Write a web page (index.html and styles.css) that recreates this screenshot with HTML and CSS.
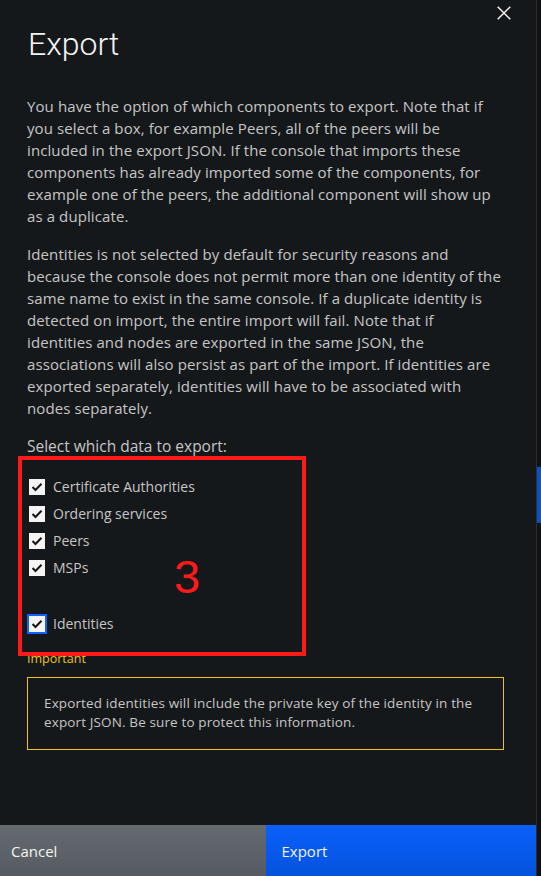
FILE: index.html
```html
<!DOCTYPE html>
<html>
<head>
<meta charset="utf-8">
<link rel="stylesheet" href="styles.css">
</head>
<body>
<div class="page">
  <div class="modal">
    <button class="close" aria-label="Close">
      <svg width="14" height="14" viewBox="0 0 14 14"><path d="M0.7 0.7 L13.3 13.3 M13.3 0.7 L0.7 13.3" stroke="#f4f4f4" stroke-width="1.5" fill="none"/></svg>
    </button>
    <div class="content">
      <h1 class="title">Export</h1>
      <p class="para">You have the option of which components to export. Note that if you select a box, for example Peers, all of the peers will be included in the export JSON. If the console that imports these components has already imported some of the components, for example one of the peers, the additional component will show up as a duplicate.</p>
      <p class="para">Identities is not selected by default for security reasons and because the console does not permit more than one identity of the same name to exist in the same console. If a duplicate identity is detected on import, the entire import will fail. Note that if<br>identities and nodes are exported in the same JSON, the associations will also persist as part of the import. If identities are exported separately, identities will have to be associated with nodes separately.</p>
      <p class="para select">Select which data to export:</p>
      <div class="checks">
        <div class="check"><span class="box"><svg width="12" height="10" viewBox="0 0 12 10"><path d="M1.5 5 L4.5 8 L10.5 1.8" stroke="#161616" stroke-width="2" fill="none"/></svg></span><span class="lbl">Certificate Authorities</span></div>
        <div class="check"><span class="box"><svg width="12" height="10" viewBox="0 0 12 10"><path d="M1.5 5 L4.5 8 L10.5 1.8" stroke="#161616" stroke-width="2" fill="none"/></svg></span><span class="lbl">Ordering services</span></div>
        <div class="check"><span class="box"><svg width="12" height="10" viewBox="0 0 12 10"><path d="M1.5 5 L4.5 8 L10.5 1.8" stroke="#161616" stroke-width="2" fill="none"/></svg></span><span class="lbl">Peers</span></div>
        <div class="check"><span class="box"><svg width="12" height="10" viewBox="0 0 12 10"><path d="M1.5 5 L4.5 8 L10.5 1.8" stroke="#161616" stroke-width="2" fill="none"/></svg></span><span class="lbl">MSPs</span></div>
        <div class="check ident"><span class="box focus"><svg width="12" height="10" viewBox="0 0 12 10"><path d="M1.5 5 L4.5 8 L10.5 1.8" stroke="#161616" stroke-width="2" fill="none"/></svg></span><span class="lbl">Identities</span></div>
      </div>
      <div class="important">Important</div>
      <div class="warning">Exported identities will include the private key of the identity in the export JSON. Be sure to protect this information.</div>
      <div class="annot"><span class="annot-num">3</span></div>
    </div>
    <div class="footer">
      <button class="btn cancel">Cancel</button>
      <button class="btn primary">Export</button>
    </div>
  </div>
  <div class="side">
    <div class="side-blue"></div>
  </div>
</div>
</body>
</html>
```
FILE: styles.css
```css
html, body {
  margin: 0;
  padding: 0;
  background: #101214;
  font-family: "Open Sans", "Noto Sans", sans-serif;
}
.page {
  display: flex;
  height: 876px;
  width: 541px;
  overflow: hidden;
}
.modal {
  position: relative;
  width: 537px;
  height: 876px;
  flex: none;
  background: #15181b;
  border-right: 1px solid #2b2f33;
  display: flex;
  flex-direction: column;
  box-sizing: border-box;
}
.side {
  flex: 1;
  background: #101214;
  padding-top: 467px;
}
.side-blue {
  height: 56px;
  background: #0b4fc9;
}
.close {
  position: absolute;
  top: 6px;
  left: 497px;
  width: 14px;
  height: 14px;
  padding: 0;
  border: 0;
  background: transparent;
  display: flex;
}
.content {
  position: relative;
  flex: 1;
  padding: 0 32px 0 27px;
}
.title {
  margin: 24px 0 0 1px;
  font-family: Roboto, sans-serif;
  font-weight: 300;
  font-size: 32px;
  line-height: 40px;
  color: #f4f4f4;
}
.para {
  margin: 0 0 16px 0;
  font-size: 15px;
  letter-spacing: 0.1px;
  line-height: 22px;
  color: #c6c6c6;
}
.title + .para {
  margin-top: 31px;
}
.para.select {
  font-size: 15.5px;
  letter-spacing: 0;
}
.checks {
  display: flex;
  flex-direction: column;
  padding-left: 2px;
  margin-top: 12px;
}
.check {
  display: flex;
  align-items: center;
  height: 27px;
}
.check.ident {
  margin-top: 29px;
}
.box {
  width: 16px;
  height: 16px;
  background: #f4f4f4;
  display: flex;
  align-items: center;
  justify-content: center;
  margin-right: 8px;
  box-sizing: border-box;
}
.box.focus {
  outline: 2px solid #0f62fe;
  outline-offset: 0;
}
.lbl {
  font-size: 14px;
  color: #c6c6c6;
}
.important {
  margin-top: 15px;
  font-size: 12.5px;
  line-height: 14px;
  color: #f1c21b;
}
.warning {
  margin-top: 11px;
  border: 1px solid #f1c21b;
  padding: 16px 16px 17px 16px;
  font-size: 13.5px;
  letter-spacing: 0.13px;
  line-height: 19px;
  color: #c6c6c6;
}
.annot {
  position: absolute;
  left: 18px;
  top: 456px;
  width: 288px;
  height: 200px;
  border: 4px solid #ff1a1a;
  box-sizing: border-box;
}
.annot-num {
  position: absolute;
  left: 152px;
  top: 91px;
  font-family: "Liberation Sans", Arial, sans-serif;
  font-size: 47px;
  line-height: 52px;
  color: #ff1a1a;
}
.footer {
  display: flex;
  height: 51px;
}
.btn {
  flex: 1;
  border: 0;
  margin: 0;
  text-align: left;
  font-family: "Open Sans", sans-serif;
  font-size: 15px;
  color: #f4f4f4;
  padding: 0 0 0 11px;
}
.btn.cancel {
  background: linear-gradient(#646a70, #565b61);
}
.btn.primary {
  background: linear-gradient(#0a60fc, #0553dc);
  padding-left: 16px;
}
```
